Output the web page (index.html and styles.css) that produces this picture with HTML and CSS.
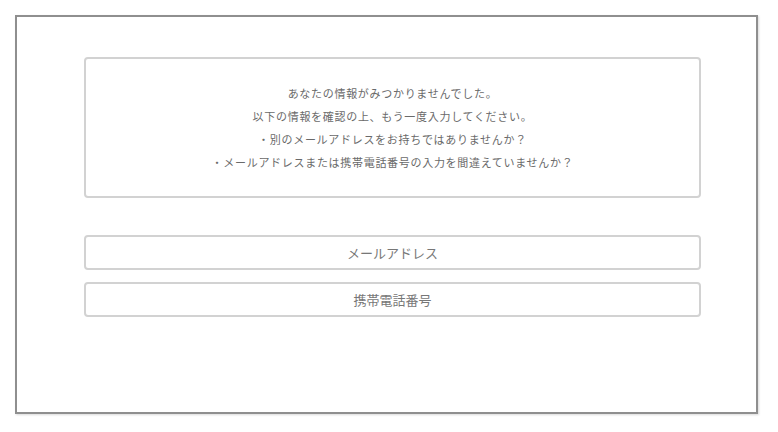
FILE: index.html
```html
<!DOCTYPE html>
<html lang="ja">

<head>
  <meta charset="UTF-8">
  <title>情報が見つかりません</title>
  <meta name="viewport" content="width=device-width,initial-scale=1">
  <link rel="stylesheet" href="styles.css">
</head>

<body>
  <div class="frame">
    <div class="notice">
      <p>あなたの情報がみつかりませんでした。</p>
      <p>以下の情報を確認の上、もう一度入力してください。</p>
      <p>・別のメールアドレスをお持ちではありませんか？</p>
      <p>・メールアドレスまたは携帯電話番号の入力を間違えていませんか？</p>
    </div>

    <div class="choices">
      <button class="choice">メールアドレス</button>
      <button class="choice">携帯電話番号</button>
    </div>
  </div>
</body>

</html>
```

FILE: styles.css
```css
* {
  box-sizing: border-box;
  margin: 0;
  padding: 0;
  font-family: "Noto Sans CJK JP", "Noto Sans", sans-serif
}

:root {
  --text: #6a6a6a;
  --line: #d2d2d2;
  --frame: #8f8f8f
}

body {
  background: #fff;
  color: var(--text);
  padding: 15px
}

.frame {
  width: 743px;
  height: 399px;
  border: 2px solid var(--frame);
  box-shadow: 1px 1px 2px rgba(0, 0, 0, .15);
  padding: 40px 0 0 67px;
  display: flex;
  flex-direction: column;
  gap: 37px
}

.notice {
  width: 617px;
  height: 141px;
  border: 2px solid var(--line);
  border-radius: 4px;
  padding-top: 23px;
  text-align: center;
  font-size: 11px;
  line-height: 23px;
  letter-spacing: .7px
}

.choices {
  width: 617px;
  display: flex;
  flex-direction: column;
  gap: 12px
}

.choice {
  height: 35px;
  background: #fff;
  border: 2px solid var(--line);
  border-radius: 4px;
  color: #777;
  font-size: 13px;
  cursor: pointer
}

.choice:hover {
  background: #f7f7f7
}
```
